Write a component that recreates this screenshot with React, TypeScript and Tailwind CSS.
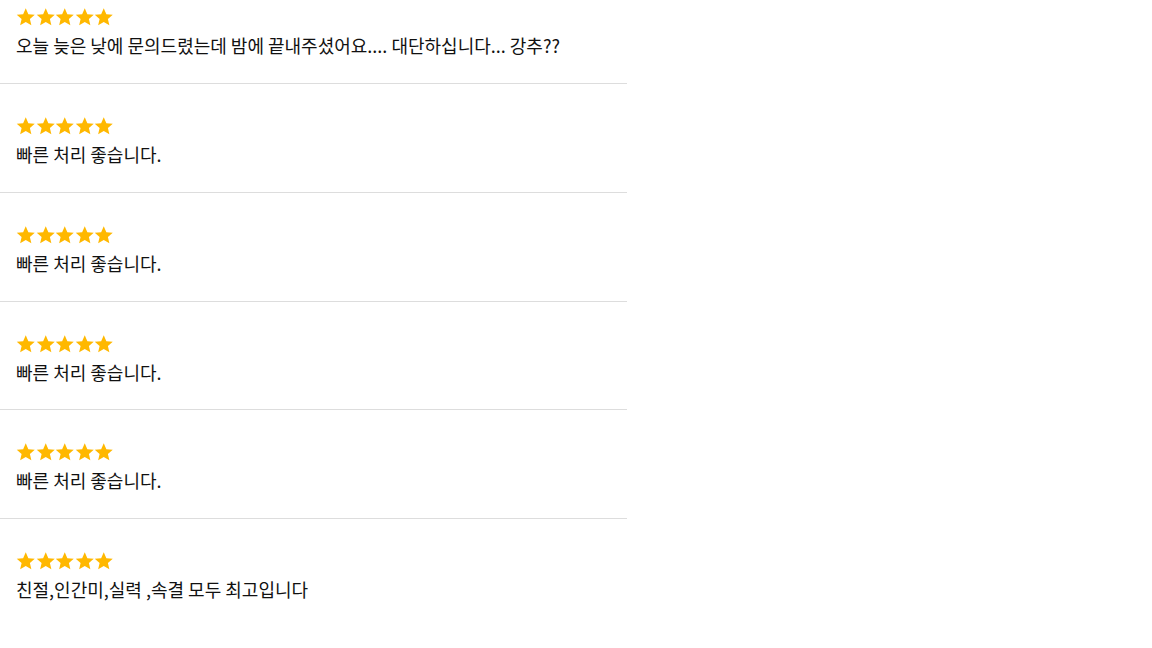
const reviews = [
  '오늘 늦은 낮에 문의드렸는데 밤에 끝내주셨어요.... 대단하십니다... 강추??',
  '빠른 처리 좋습니다.',
  '빠른 처리 좋습니다.',
  '빠른 처리 좋습니다.',
  '빠른 처리 좋습니다.',
  '친절,인간미,실력 ,속결 모두 최고입니다',
];

const Star = () => (
  <svg viewBox="0 0 24 24" className="w-[19.5px] h-[20px]" fill="#FFB800">
    <path d="M12 1.2l3.2 7.3 7.9.7-6 5.2 1.8 7.8L12 18.1l-6.9 4.1 1.8-7.8-6-5.2 7.9-.7z" />
  </svg>
);

export default function App() {
  return (
    <div className="min-h-screen bg-white overflow-hidden" style={{ fontFamily: '"Noto Sans CJK KR", "Noto Sans", sans-serif' }}>
      <ul className="w-[627px] -mt-[24.8px]">
        {reviews.map((text, i) => (
          <li key={i} className="h-[108.8px] border-b border-[#dddddd] px-4 pt-[32px] last:border-b-0">
            <div className="flex">
              {[0, 1, 2, 3, 4].map((s) => (
                <Star key={s} />
              ))}
            </div>
            <p className="mt-[5px] text-[18px] leading-[26px] text-[#111]">{text}</p>
          </li>
        ))}
      </ul>
    </div>
  );
}
